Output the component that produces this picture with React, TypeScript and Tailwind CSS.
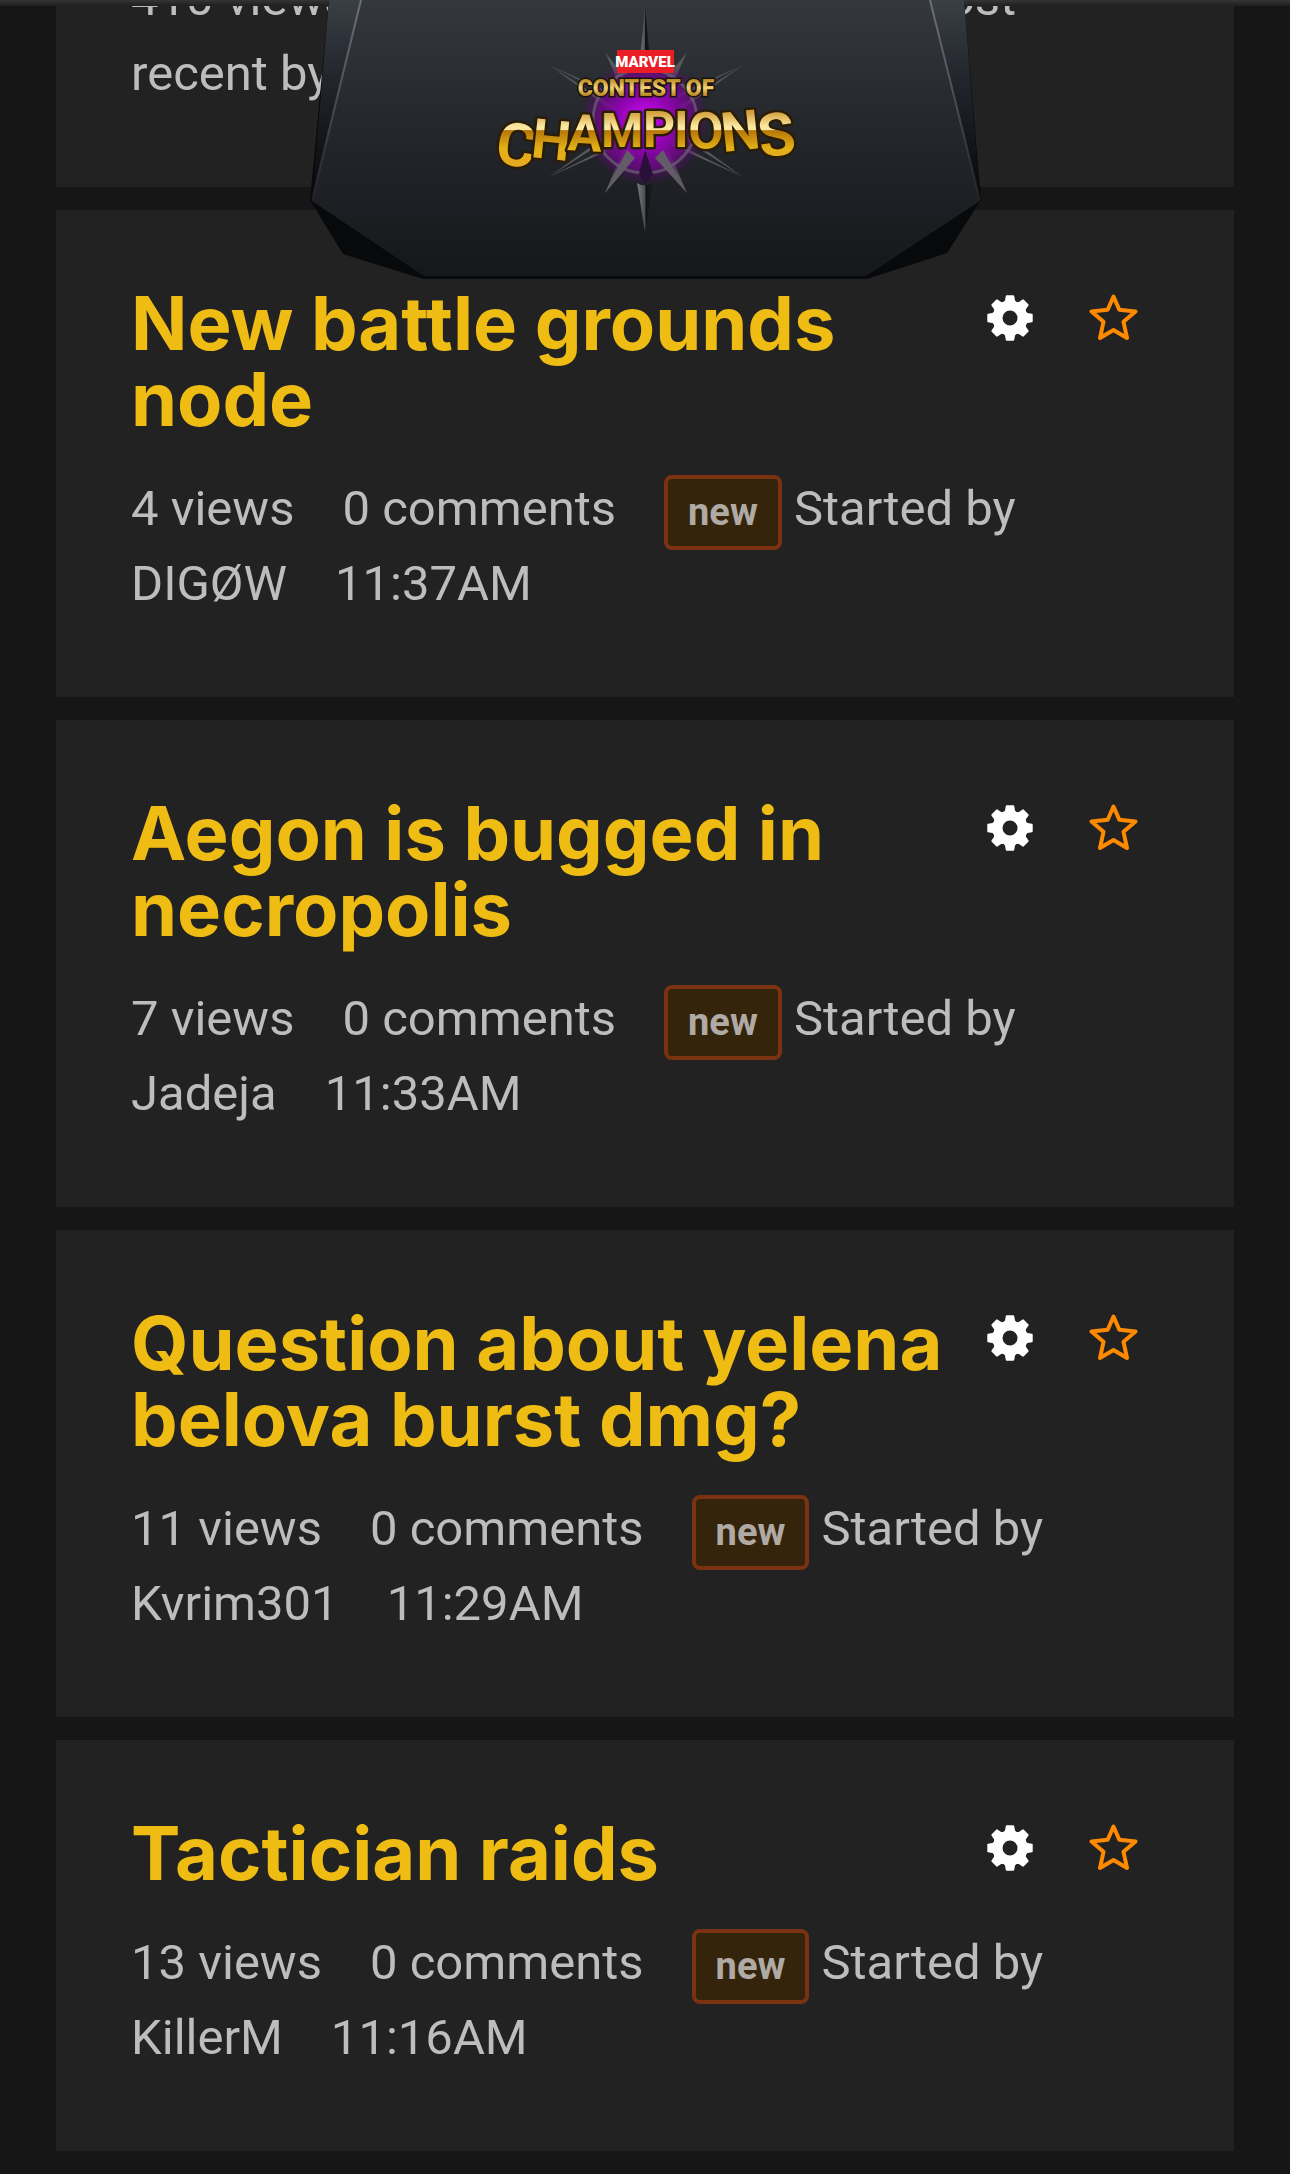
type Discussion = {
  id: number;
  title?: string;
  views: number;
  comments: number;
  action: string;
  user?: string;
  time?: string;
};

const discussions: Discussion[] = [
  { id: 1, views: 410, comments: 104, action: "Most recent by" },
  { id: 2, title: "New battle grounds node", views: 4, comments: 0, action: "Started by", user: "DIGØW", time: "11:37AM" },
  { id: 3, title: "Aegon is bugged in necropolis", views: 7, comments: 0, action: "Started by", user: "Jadeja", time: "11:33AM" },
  { id: 4, title: "Question about yelena belova burst dmg?", views: 11, comments: 0, action: "Started by", user: "Kvrim301", time: "11:29AM" },
  { id: 5, title: "Tactician raids", views: 13, comments: 0, action: "Started by", user: "KillerM", time: "11:16AM" },
];

// outer letters are bigger, sit lower and lean towards the middle
const champions = [
  { char: "C", x: 183, y: 163, size: 60, angle: 8 },
  { char: "H", x: 219, y: 157, size: 55, angle: 6 },
  { char: "A", x: 256, y: 150, size: 51, angle: 3 },
  { char: "M", x: 290, y: 147, size: 48, angle: 0 },
  { char: "P", x: 332, y: 147, size: 50, angle: 0 },
  { char: "I", x: 363, y: 147, size: 50, angle: 0 },
  { char: "O", x: 378, y: 149, size: 51, angle: -2 },
  { char: "N", x: 412, y: 152, size: 55, angle: -6 },
  { char: "S", x: 450, y: 158, size: 60, angle: -8 },
];

const spikes = ["238,65", "432,65", "238,177", "432,177", "294,193", "376,193", "294,52", "376,52"];

const toothAngles = [0, 45, 90, 135, 180, 225, 270, 315];

function GearIcon() {
  return (
    <svg viewBox="0 0 46 46" className="size-[46px]" fill="currentColor" aria-hidden="true">
      <circle cx="23" cy="23" r="12.5" fill="none" stroke="currentColor" strokeWidth="10" />
      {toothAngles.map((a) => (
        <path key={a} d="M16 8 L18 5.500 L18.800 1 Q19 0.300 19.800 0.300 L26.200 0.300 Q27 0.300 27.200 1 L28 5.500 L30 8 Z" transform={`rotate(${a} 23 23)`} />
      ))}
    </svg>
  );
}

function StarIcon() {
  return (
    <svg viewBox="0 0 50 50" className="size-[50px]" fill="none" stroke="#ff8a00" strokeWidth="4" strokeLinejoin="round" aria-hidden="true">
      <path d="M24.500 3.500 L30.300 16.800 L46.500 18.500 L34.500 28.800 L38 45 L24.500 37 L11 45 L14.500 28.800 L2.500 18.500 L18.700 16.800 Z" />
    </svg>
  );
}

function Logo() {
  return (
    <svg viewBox="0 0 672 280" className="h-[280px] w-[672px]" role="img" aria-label="Marvel Contest of Champions">
      <defs>
        <linearGradient id="plate" x1="0" y1="0" x2="0" y2="1">
          <stop offset="0" stopColor="#34373b" />
          <stop offset="0.45" stopColor="#24272c" />
          <stop offset="1" stopColor="#16171b" />
        </linearGradient>
        <linearGradient id="side" x1="0" y1="0" x2="0" y2="1">
          <stop offset="0" stopColor="#3a3e45" />
          <stop offset="0.4" stopColor="#22252c" />
          <stop offset="1" stopColor="#07080a" />
        </linearGradient>
        <linearGradient id="edge" gradientUnits="userSpaceOnUse" x1="0" y1="0" x2="0" y2="200">
          <stop offset="0" stopColor="#6b6f78" />
          <stop offset="1" stopColor="#6b6f78" stopOpacity="0.15" />
        </linearGradient>
        <linearGradient id="gold" gradientUnits="userSpaceOnUse" x1="0" y1="106" x2="0" y2="166">
          <stop offset="0" stopColor="#c1820f" />
          <stop offset="0.34" stopColor="#fbe7a0" />
          <stop offset="0.4" stopColor="#fbe7a0" />
          <stop offset="0.41" stopColor="#b67608" />
          <stop offset="0.7" stopColor="#e2b018" />
          <stop offset="1" stopColor="#e8a820" />
        </linearGradient>
        <linearGradient id="goldSmall" gradientUnits="userSpaceOnUse" x1="0" y1="79" x2="0" y2="97">
          <stop offset="0" stopColor="#b98a22" />
          <stop offset="0.5" stopColor="#f0d278" />
          <stop offset="1" stopColor="#a97814" />
        </linearGradient>
        <linearGradient id="steel" x1="0" y1="0" x2="1" y2="0">
          <stop offset="0" stopColor="#77797c" />
          <stop offset="0.5" stopColor="#4b4d50" />
          <stop offset="0.55" stopColor="#121316" />
          <stop offset="1" stopColor="#1b1c1f" />
        </linearGradient>
        <radialGradient id="glow">
          <stop offset="0" stopColor="#d20aff" />
          <stop offset="0.45" stopColor="#8c04ac" />
          <stop offset="0.74" stopColor="#6c0886" stopOpacity="0.8" />
          <stop offset="1" stopColor="#4a0a60" stopOpacity="0" />
        </radialGradient>
      </defs>

      <path d="M20 0 L1 200 L34 254 L114 279 H558 L638 253 L672 200 L655 0 Z" fill="#08090b" />
      <path d="M20 0 H52 L3 198 Z" fill="url(#side)" />
      <path d="M655 0 H621 L671 198 Z" fill="url(#side)" />
      <path d="M52 0 H621 L671 201 L557 276 H115 L3 201 Z" fill="url(#plate)" />
      <path d="M52 0 L3 200" stroke="url(#edge)" strokeWidth="2" />
      <path d="M621 0 L671 200" stroke="url(#edge)" strokeWidth="2" />

      <g transform="translate(2 0)">
        {spikes.map((tip) => (
          <path key={tip} d={`M329 111 L${tip} L341 131 Z M329 131 L${tip} L341 111 Z`} fill="#55575a" />
        ))}
        <path d="M334 8 L339 60 H329 Z" fill="url(#steel)" />
        <circle cx="334" cy="121" r="64" fill="url(#glow)" />
        <circle cx="334" cy="121" r="52" fill="none" stroke="#6c6474" strokeWidth="3" strokeOpacity="0.7" />
        <path d="M334 150 L342 174 L334 184 L328 174 Z" fill="#2a1038" />
        <path d="M316 150 L294 193 L324 158 Z M352 150 L376 193 L344 158 Z" fill="#625c68" />
        <path d="M326 183 Q334 188 342 183 L334 232 Z" fill="url(#steel)" />

        <rect x="306" y="50" width="57" height="23" fill="#ec1d24" />
        <text x="334" y="67" textAnchor="middle" fontSize="15" className="fill-white font-black">
          MARVEL
        </text>
        <text x="335" y="96" textAnchor="middle" fontSize="23" fill="url(#goldSmall)" stroke="#1b1206" strokeWidth="3" paintOrder="stroke" className="font-black">
          CONTEST OF
        </text>
        {champions.map(({ char, x, y, size, angle }, i) => (
          <text key={i} x={x} y={y} fontSize={size} rotate={angle} fill="url(#gold)" stroke="#2b1c06" strokeWidth="5" strokeLinejoin="round" paintOrder="stroke" className="font-bold">
            {char}
          </text>
        ))}
      </g>
    </svg>
  );
}

function Header() {
  return (
    <header className="absolute inset-x-0 top-0 z-10">
      <div className="h-[6px] bg-linear-to-b from-[#343536] to-[#1f1f20]" />
      <a href="#home" className="absolute left-1/2 top-0 -translate-x-1/2">
        <Logo />
      </a>
    </header>
  );
}

function Meta({ views, comments, action, user, time }: Discussion) {
  return (
    <p className="text-[49px] leading-[75px] text-[#bdbdbd]">
      <span className="mr-12">{views} views</span>
      <span className="mr-12">{comments} comments</span>
      <span className="-my-4 inline-block rounded-lg border-4 border-[#7a3210] bg-[#35240c] px-5 py-3 align-middle text-[38px] font-bold leading-[43px] text-[#b0aaa4]">
        new
      </span>{" "}
      <span className="mr-12">
        {action} {user}
      </span>
      {time && <time>{time}</time>}
    </p>
  );
}

function DiscussionCard(discussion: Discussion) {
  return (
    <li className="bg-[#222222] pb-[76px] pl-[75px] pr-[95px]">
      {discussion.title && (
        <div className="mb-[34px] flex items-start justify-between pt-[75px]">
          <h2 className="font-[Inter,sans-serif] text-[74px] font-bold leading-[76px] text-[#efbc13]">
            <a href="#discussion">{discussion.title}</a>
          </h2>
          <div className="mt-2 flex shrink-0 items-center gap-14">
            <button type="button" aria-label="Options" className="text-white">
              <GearIcon />
            </button>
            <button type="button" aria-label="Bookmark">
              <StarIcon />
            </button>
          </div>
        </div>
      )}
      <Meta {...discussion} />
    </li>
  );
}

export default function App() {
  return (
    <div className="relative min-h-screen overflow-hidden bg-[#161616] font-[Roboto,sans-serif]">
      <Header />
      <main className="-mt-[39px] px-14 pb-[22px]">
        <ul className="flex flex-col gap-[23px]">
          {discussions.map((d) => (
            <DiscussionCard key={d.id} {...d} />
          ))}
        </ul>
      </main>
    </div>
  );
}
